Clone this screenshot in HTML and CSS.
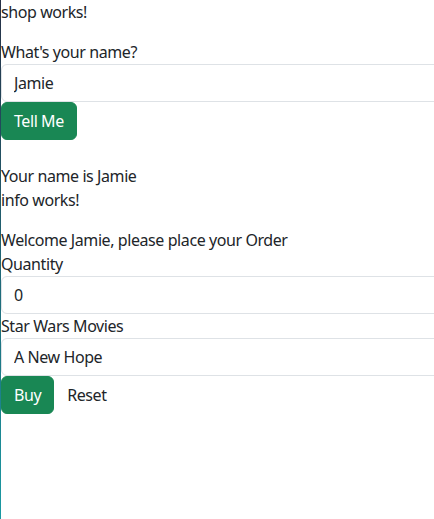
FILE: index.html
```html
<!DOCTYPE html>
<html>
<head>
<meta charset="utf-8">
<link rel="stylesheet" href="styles.css">
</head>
<body>
<div class="page">
  <p class="line">shop works!</p>
  <label class="label">What's your name?</label>
  <input class="field" type="text" value="Jamie">
  <button class="btn btn-success">Tell Me</button>
  <p class="line result">Your name is Jamie</p>
  <p class="line">info works!</p>
  <p class="line gap-top">Welcome Jamie, please place your Order</p>
  <label class="label">Quantity</label>
  <input class="field" type="text" value="0">
  <label class="label">Star Wars Movies</label>
  <input class="field" type="text" value="A New Hope">
  <div class="actions">
    <button class="btn btn-success">Buy</button>
    <button class="btn btn-plain">Reset</button>
  </div>
</div>
</body>
</html>
```
FILE: styles.css
```css
html, body {
  margin: 0;
  padding: 0;
  overflow: hidden;
}
body {
  font-family: "Noto Sans", "Liberation Sans", sans-serif;
  font-size: 16px;
  line-height: 24px;
  letter-spacing: -0.42px;
  color: #212529;
  background: #fff;
  height: 519px;
  border-left: 1px solid transparent;
  border-image: linear-gradient(#263046, #1a9aa3) 1;
  border-left-width: 1px;
}
.page {
  display: flex;
  flex-direction: column;
  align-items: flex-start;
}
.line {
  margin: 0 0 16px 0;
  height: 24px;
}
.result {
  margin-top: 24px;
  margin-bottom: 0;
}
.gap-top {
  margin-bottom: 0;
}
.label {
  display: block;
  height: 24px;
}
.field {
  box-sizing: border-box;
  width: 450px;
  height: 38px;
  margin: 0;
  padding: 6px 12px;
  font: inherit;
  letter-spacing: inherit;
  color: #212529;
  border: 1px solid #dee2e6;
  border-radius: 6px;
  background: #fff;
}
.btn {
  box-sizing: border-box;
  height: 38px;
  padding: 6px 12px;
  font: inherit;
  letter-spacing: inherit;
  border: 1px solid transparent;
  border-radius: 6px;
  margin: 0;
  cursor: pointer;
}
.btn-success {
  background: #198754;
  border-color: #198754;
  color: #fff;
}
.btn-plain {
  background: transparent;
  color: #212529;
}
.actions {
  display: flex;
}
```
